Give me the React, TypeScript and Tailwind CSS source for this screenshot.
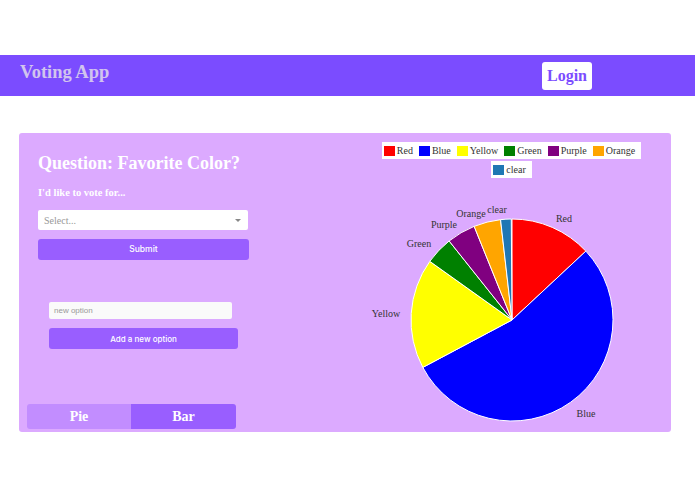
import React from 'react';

type Slice = { label: string; color: string; from: number; to: number; lx: number; ly: number };

// angles are degrees clockwise from 12 o'clock, label spots are in svg coords
const slices: Slice[] = [
  { label: 'Red', color: '#ff0000', from: 0, to: 47, lx: 211, ly: 40 },
  { label: 'Blue', color: '#0000ff', from: 47, to: 242, lx: 233, ly: 235 },
  { label: 'Yellow', color: '#ffff00', from: 242, to: 305.5, lx: 33, ly: 135 },
  { label: 'Green', color: '#008000', from: 305.5, to: 321.5, lx: 66, ly: 65 },
  { label: 'Purple', color: '#800080', from: 321.5, to: 338, lx: 91, ly: 46 },
  { label: 'Orange', color: '#ffa500', from: 338, to: 353.5, lx: 118, ly: 35 },
  { label: 'clear', color: '#1f77b4', from: 353.5, to: 359.6, lx: 144, ly: 31 },
];

const legendTop = slices.slice(0, 6);
const legendBottom = slices.slice(6);

function arc(cx: number, cy: number, r: number, from: number, to: number) {
  const rad = (d: number) => (d * Math.PI) / 180;
  const x1 = cx + r * Math.sin(rad(from));
  const y1 = cy - r * Math.cos(rad(from));
  const x2 = cx + r * Math.sin(rad(to));
  const y2 = cy - r * Math.cos(rad(to));
  const large = to - from > 180 ? 1 : 0;
  return `M ${cx} ${cy} L ${x1} ${y1} A ${r} ${r} 0 ${large} 1 ${x2} ${y2} Z`;
}

function LegendRow({ items }: { items: Slice[] }) {
  return (
    <div className="flex h-[17px] items-center bg-white pl-[2px]">
      {items.map((s) => (
        <div key={s.label} className="flex items-center">
          <span className="h-[10px] w-[11px]" style={{ backgroundColor: s.color }} />
          <span className="ml-[2px] mr-[6px] text-[10px] leading-none text-[#333]">{s.label}</span>
        </div>
      ))}
    </div>
  );
}

function PieChart() {
  const cx = 159;
  const cy = 142;
  const r = 101;
  return (
    <svg width="318" height="250" viewBox="0 0 318 250">
      {slices.map((s) => (
        <path key={s.label} d={arc(cx, cy, r, s.from, s.to)} fill={s.color} stroke="#ffffff" strokeWidth="1" />
      ))}
      {slices.map((s) => (
        <text
          key={s.label}
          x={s.lx}
          y={s.ly + 3.5}
          textAnchor="middle"
          fontSize="10"
          fill="#333"
          fontFamily="'Liberation Serif', serif"
        >
          {s.label}
        </text>
      ))}
    </svg>
  );
}

export default function App() {
  return (
    <div className="min-h-[494px] bg-white pt-[55px] font-['Liberation_Serif',serif]">
      <header className="flex h-[41px] items-center justify-between bg-[#7b4cff] pl-[20px] pr-[103px]">
        <h1 className="mb-[7px] text-[18.5px] font-bold leading-[22px] text-[#d1c4ee]">Voting App</h1>
        <button className="h-[28px] rounded-[3px] bg-white px-[5px] text-[16px] font-bold text-[#7b4cff]">Login</button>
      </header>

      <div className="ml-[19px] mt-[37px] flex h-[299px] w-[652px] rounded-[3px] bg-[#dcaaff]">
        <div className="flex w-[333px] flex-col pt-[19px]">
          <h2 className="ml-[19px] text-[18px] font-bold leading-[22px] text-white">Question: Favorite Color?</h2>
          <p className="ml-[19px] mt-[12px] text-[10.5px] font-bold leading-[14px] text-white">I'd like to vote for...</p>

          <div className="ml-[19px] mt-[10px] flex h-[20px] w-[210px] items-center justify-between rounded-[2px] bg-white pl-[6px] pr-[7px]">
            <span className="text-[10px] text-[#999]">Select...</span>
            <span className="h-0 w-0 border-x-[3px] border-t-[3px] border-x-transparent border-t-[#888]" />
          </div>

          <button className="ml-[19px] mt-[9px] h-[21px] w-[211px] rounded-[3px] bg-[#995eff] font-['Inter',sans-serif] text-[8.5px] font-medium text-white">
            Submit
          </button>

          <div className="ml-[30px] mt-[42px] flex h-[17px] w-[183px] items-center rounded-[2px] bg-[#fafafa] pl-[5px]">
            <span className="font-['Liberation_Sans',sans-serif] text-[8px] text-[#999]">new option</span>
          </div>

          <button className="ml-[30px] mt-[9px] h-[21px] w-[189px] rounded-[3px] bg-[#995eff] font-['Inter',sans-serif] text-[8px] font-medium text-white">
            Add a new option
          </button>

          <div className="ml-[8px] mt-[55px] flex h-[25px] w-[209px] overflow-hidden rounded-[3px] text-[14px] font-bold text-white">
            <div className="flex w-[104px] items-center justify-center bg-[#c28dff]">Pie</div>
            <div className="flex flex-1 items-center justify-center bg-[#995eff]">Bar</div>
          </div>
        </div>

        <div className="flex flex-1 flex-col items-center pt-[9px]">
          <LegendRow items={legendTop} />
          <div className="mt-[2px]">
            <LegendRow items={legendBottom} />
          </div>
          <PieChart />
        </div>
      </div>
    </div>
  );
}
